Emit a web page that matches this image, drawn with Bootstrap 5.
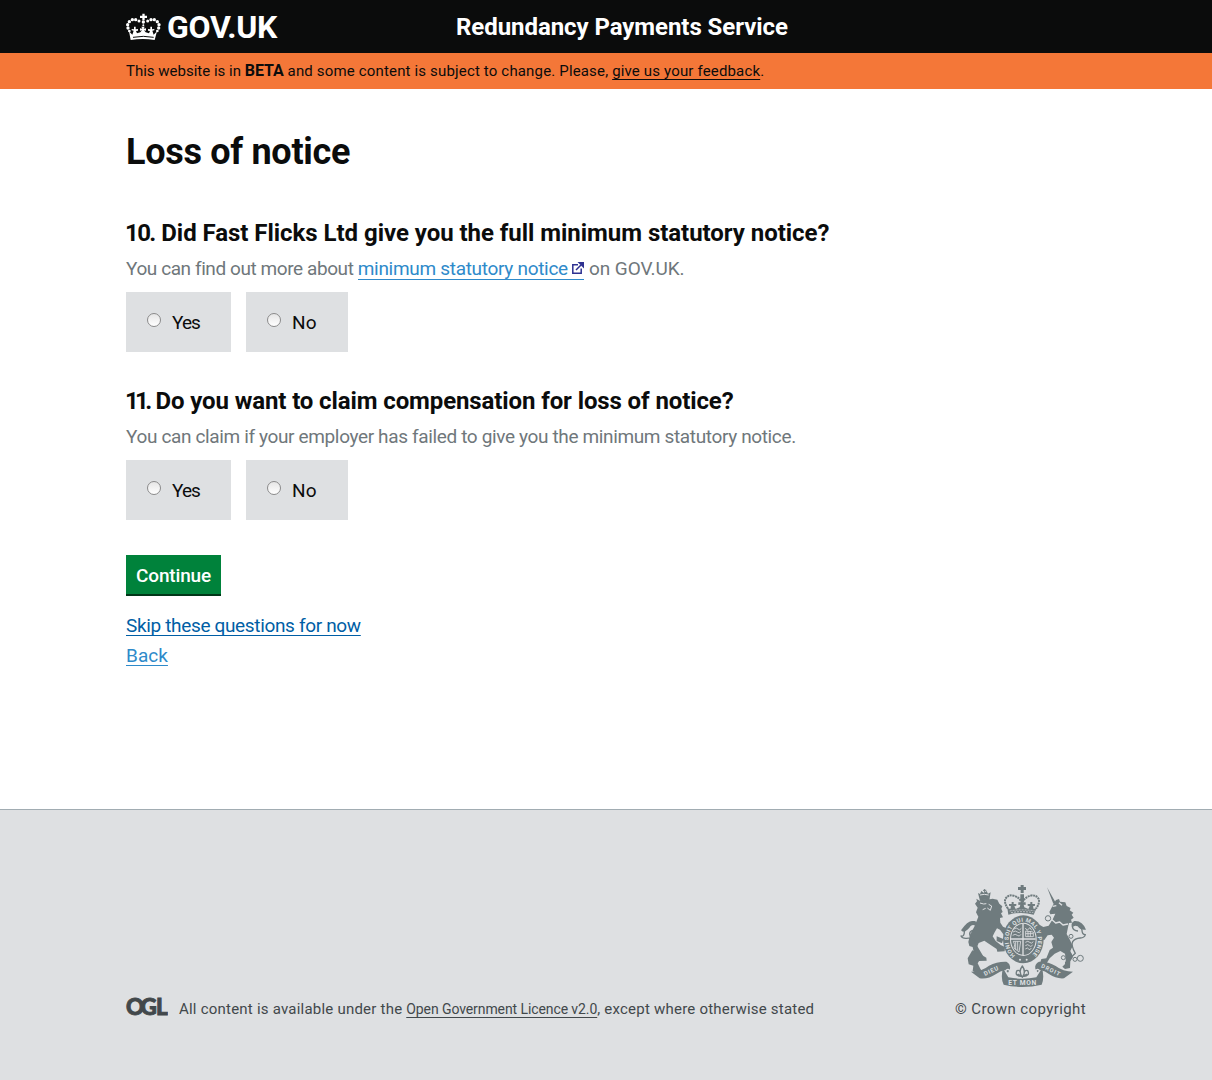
<!DOCTYPE html>
<html lang="en">
<head>
<meta charset="utf-8">
<meta name="viewport" content="width=device-width, initial-scale=1">
<title>Loss of notice - Redundancy Payments Service</title>
<link href="https://cdn.jsdelivr.net/npm/bootstrap@5.3.0/dist/css/bootstrap.min.css" rel="stylesheet">
<style>
body{font-family:Roboto,"Liberation Sans",sans-serif;font-size:19px;line-height:25px;color:#0b0c0c;letter-spacing:-.36px;white-space:nowrap}
a{text-decoration-line:underline;text-decoration-thickness:1px;text-underline-offset:3px;text-decoration-skip-ink:none}
.wrap{width:960px;margin-left:126px}
.top-bar{background:#0b0c0c;height:53px;color:#fff}
.brand{width:330px;font-size:32px;font-weight:700;letter-spacing:-.28px;line-height:55px;color:#fff;text-decoration:none}
.brand svg{margin:-2px 6px 0 0}
.service-name{font-size:24px;font-weight:700;letter-spacing:-.06px;line-height:55px;color:#fff;text-decoration:none}
.beta-bar{background:#f47738;height:36px;font-size:15px;line-height:36px;letter-spacing:.16px}
.beta-bar a{color:#0b0c0c}
.beta-bar strong{font-size:16px;letter-spacing:-.05px}
.beta-lead{letter-spacing:0}
main{height:720px;padding-top:43px}
h1{font-size:36px;font-weight:700;line-height:40px;letter-spacing:-.3px;margin:0 0 46px}
h2{font-size:24px;font-weight:700;line-height:30px;letter-spacing:-.04px;margin:0 0 8px -1px}
h2 span{letter-spacing:-1.6px;word-spacing:2.2px}
#q11 h2{letter-spacing:-.11px}
#q11 h2 span{letter-spacing:-3.7px;word-spacing:4.800px}
.question{margin-bottom:34px}
#q11{margin-bottom:35px}
.hint-text{color:#6f777b;margin:0 0 11px}
.hint-start{letter-spacing:-.42px}
.hint-end{letter-spacing:-.05px}
.hint-text a{display:inline-block;line-height:20px;color:#2e8aca;letter-spacing:-.3px;text-decoration:none;border-bottom:1px solid #2e8aca}
.hint-text svg{vertical-align:1px}
.choices{gap:15px}
.choice{background:#dee0e2;height:60px;padding:1px 0 0 21px;width:105px;letter-spacing:-.9px}
.choice + .choice{width:102px;letter-spacing:.3px}
.choice input{appearance:none;width:14px;height:14px;border:1px solid #8b8b8b;border-radius:50%;background:linear-gradient(#e6e6e6,#fff);margin:-6px 11px 0 0}
.btn-go{background:#00823b;color:#fff;width:95px;height:39px;border:0;border-radius:0;box-shadow:0 2px 0 #003618;font-size:19px;font-weight:500;line-height:25px;letter-spacing:-.17px;padding:2px 0 0;margin-bottom:17px}
.btn-go:hover{background:#00692f;color:#fff}
.next-links{line-height:30px}
.skip-link{color:#005ea5;letter-spacing:-.34px}
.back-link{color:#2e8aca;letter-spacing:.05px}
footer{background:#dee0e2;border-top:1px solid #a1acb2;height:271px;padding-top:74px;font-size:15px;line-height:20px;color:#42484b;letter-spacing:.22px}
footer a{color:#42484b;font-size:14px;letter-spacing:-.09px}
.ogl-mark{margin:-3px 11px 0 -1px}
.arms{margin:0 -1px 11px 0}
.crown-copy{letter-spacing:.4px}
</style>
</head>
<body>
<header class="top-bar"><div class="wrap d-flex">
<a class="brand d-flex align-items-center" href="#"><svg width="35" height="28" viewBox="48 36 105 84" fill="#fff" aria-hidden="true"><path d="M97 38h7v6h7v7h-7v7h-7v-7h-7v-7h7z"/><g><circle cx="100" cy="63" r="5"/><circle cx="87" cy="60" r="4.5"/><circle cx="77" cy="56" r="5"/><circle cx="67" cy="56" r="5"/><circle cx="58" cy="62" r="5"/><circle cx="53" cy="71" r="5"/><circle cx="54" cy="81" r="5"/><circle cx="58" cy="90" r="4"/><circle cx="113" cy="60" r="4.5"/><circle cx="123" cy="56" r="5"/><circle cx="133" cy="56" r="5"/><circle cx="142" cy="62" r="5"/><circle cx="147" cy="71" r="5"/><circle cx="146" cy="81" r="5"/><circle cx="142" cy="90" r="4"/><circle cx="100" cy="73" r="3"/></g><path d="M57 91l10 10 4-12-6-1v-4l7 1v-8h5v8l7-1v5l-6 1 3 7 10-3 5-6-6 1v-7l7 1-3-6h10l-3 6 7-1v7l-6-1 5 6 10 3 3-7-6-1v-5l7 1v-8h5v8l7-1v4l-6 1 4 12 10-10-7 26q-36-6-72 0z"/><path d="M69 109q31-6 62 0" stroke="#0b0c0c" stroke-width="3" fill="none"/></svg>GOV.UK</a>
<a class="service-name" href="#">Redundancy Payments Service</a>
</div></header>
<div class="beta-bar"><div class="wrap"><span class="beta-lead">This website is in </span><strong>BETA</strong> and some content is subject to change. Please, <a href="#">give us your feedback</a>.</div></div>
<main class="wrap">
<h1>Loss of notice</h1>
<form>
<section class="question" id="q10">
<h2><span>10. </span>Did Fast Flicks Ltd give you the full minimum statutory notice?</h2>
<p class="hint-text"><span class="hint-start">You can find out more about </span><a href="#">minimum statutory notice <svg width="12" height="12" viewBox="0 0 12 12" fill="none" stroke="#2e3191" stroke-width="1.5" aria-hidden="true"><path d="M6 2.7H.8v8.5h8.4V6.500M4 8l5-5"/><path d="M5.500 0H12v6.500z" fill="#2e3191" stroke="none"/></svg></a><span class="hint-end"> on GOV.UK.</span></p>
<div class="choices d-flex"><label class="choice d-flex align-items-center"><input type="radio" name="notice">Yes</label><label class="choice d-flex align-items-center"><input type="radio" name="notice">No</label></div>
</section>
<section class="question" id="q11">
<h2><span>11. </span>Do you want to claim compensation for loss of notice?</h2>
<p class="hint-text">You can claim if your employer has failed to give you the minimum statutory notice.</p>
<div class="choices d-flex"><label class="choice d-flex align-items-center"><input type="radio" name="claim">Yes</label><label class="choice d-flex align-items-center"><input type="radio" name="claim">No</label></div>
</section>
<button type="button" class="btn btn-go d-block">Continue</button>
<div class="next-links d-flex flex-column align-items-start"><a class="skip-link" href="#">Skip these questions for now</a><a class="back-link" href="#">Back</a></div>
</form>
</main>
<footer><div class="wrap d-flex align-items-end justify-content-between">
<div class="d-flex"><svg class="ogl-mark" width="43" height="23" viewBox="-1 0 43 23" role="img" aria-label="OGL"><text x="0 14.600 30" y="19" font-family="Lato" font-weight="900" font-size="22.5" fill="#42484b" stroke="#42484b" stroke-width=".9" letter-spacing="0">OGL</text></svg><div>All content is available under the <a href="#">Open Government Licence v2.0</a>, except where otherwise stated</div></div>
<div class="d-flex flex-column align-items-end">
<svg class="arms" width="127" height="104" viewBox="45 27 381 312" fill="#6f7b7e" stroke-linejoin="round" role="img" aria-label="Royal coat of arms">
<!-- lion -->
<g stroke="#6f7b7e">
<path stroke="none" d="M99 54l6 3 4-9 8 6 8-6 4 8 8-4-4 24q-14-5-28 2z"/>
<path fill="none" stroke-width="3" d="M119 42v14M114 46h10"/>
<path stroke="none" d="M104 77q14-7 30-4l9-2 14 3 6 12 9 8-3 7 4 10-5 4 6 12-9 2 1 14 8 12 9 4 0 26-8-7-10-14-9-4-7 12-6 12 9 14 15 12 13 6-1 13-22 1-2-8-18-12-19-13-17 7-4 10 9 15 8 13 10 6 1 9-24 1-14-22-4-20-10-3-3-12 5-22 14-26 11-28-7-13 5-14-8-12 6-7-2-8z"/>
<path fill="none" stroke-width="4" d="M83 233q18-6 10-26-9-20-28-17-13 1-17-7 10 2 10-12 3-24 25-30 12-4 12 10-1 14-16 17-8 5-3 15l18 20"/>
<path stroke="none" d="M48 166q20-30 37-28 11 3 9 18-7-10-17-3-10 16-23 17z"/>
<path stroke="none" d="M155 184l20 8-4 13-16-7zM82 226l-14 24 3 18 14 4-2 16 15 8 17-1-9-14-8-16 15-24z"/>
</g>
<path d="M105 84l11 3 8-1M131 88l9 5-4 13-9-7M113 104l9-4M105 60q13-4 26 0" fill="none" stroke="#dee0e2" stroke-width="3"/>
<!-- unicorn -->
<path d="M306 37l25 44-6 5zM326 86l7-11 9-3 3 8 16 2 4 11 12 6-3 7 11 7-5 6 6 9-8 6 3 9-9 1-3 13-4 20 10 18 8 18-7 15 8 18-8 13-1 20-15 3-8-7 11-11-3-28-14-8-17 8-15 14-9 15-19-3 3-10 15-2 10-25 10-7-5-17 8-13-7-9-12 2-10 14-11-3 4-11-10-14-5 13-11-4 4-15-3-10 13-4 16 9 16-4 13-21 7-15-15 2-3-7z"/>
<path d="M303 128l8 10 10-4 11 10 12-3 10 9 15-3M323 94l11-2M342 83l9 8" fill="none" stroke="#dee0e2" stroke-width="4"/>
<path d="M376 249l15-14q-14-24-8-35 6-10 23-11 12 0 15-10-10 0-10-13-3-20-22-24-9 0-7 13 2 12 17 13" fill="none" stroke="#6f7b7e" stroke-width="4"/>
<path d="M423 164q-11-28-35-26-10 5-5 19 5-8 15-3 9 13 25 10z"/>
<g fill="none" stroke="#6f7b7e" stroke-width="3"><circle cx="406" cy="250" r="9"/><circle cx="390" cy="253" r="6"/><circle cx="375" cy="240" r="5"/><circle cx="355" cy="248" r="6"/><circle cx="367" cy="264" r="6"/><circle cx="378" cy="184" r="6"/><circle cx="309" cy="130" r="8"/></g>
<!-- shield and garter -->
<ellipse cx="235" cy="193" rx="61" ry="72"/>
<ellipse cx="235" cy="193" rx="40" ry="50" fill="#dee0e2"/>
<ellipse cx="235" cy="193" rx="37" ry="47"/>
<path d="M234 146v94M198 192h74" stroke="#dee0e2" stroke-width="4"/>
<g fill="none" stroke="#dee0e2" stroke-width="2.500"><path d="M207 162q7-6 12 0t10-2M204 171q7-6 13 0t11-2M203 181q8-6 14 0t11-3M241 202q8-6 13 0t11-2M241 212q8-6 12 0t10-2M241 222q7-6 10 0t8-3M241 159l5 7 9-8 5 8M242 168v17h23v-14zM249 168v17M256 168v17M242 176h22M205 199q7 10 2 20l15 12 5-32zM212 200v24M218 199v27"/></g>
<path id="garter" d="M211 241A44 55 0 1 1 259 241" fill="none"/>
<text fill="#dee0e2" font-family="Roboto" font-size="17" font-weight="700" letter-spacing="0"><textPath href="#garter" textLength="255">HONI SOIT QUI MAL Y PENSE</textPath></text>
<g fill="#dee0e2"><circle cx="225" cy="254" r="3"/><circle cx="245" cy="254" r="3"/></g>
<!-- crown -->
<path d="M227 30h9v6h7v9h-7v9h-9v-9h-8v-9h8zM226 58h11v21h-11z"/>
<path d="M189 101q-12-17-8-29 8-14 25-10 18 5 25 22 8-17 25-22 17-4 25 10 4 12-8 29" fill="none" stroke="#6f7b7e" stroke-width="6" stroke-dasharray="6 2"/>
<path d="M187 99l9 3 2-8-6-2v-5h8v-6h6v6h8v5l-6 2 4 8 12-5 2-8-6 1v-8h22v8l-6-1 2 8 12 5 4-8-6-2v-5h8v-6h6v6h8v5l-6 2 2 8 9-3-9 20q-38-10-76 0z"/>
<path d="M194 108q37-7 75 0M198 113q34-6 67 0" fill="none" stroke="#dee0e2" stroke-width="2" stroke-dasharray="6 3"/>
<!-- motto ribbons -->
<path d="M78 290q32 0 54-18 24-13 52-12 13 6 11 22l-6 11-8-8q-15 2-29 13-22 15-48 12z"/>
<path d="M384 290q-30 0-52-17-22-14-50-13-14 7-11 21l6 11 8-7q16 3 28 13 20 14 44 12z"/>
<path d="M174 280l16 27q42 8 84 0l17-27q8 27-1 49-58 14-114 0-10-21-2-49z"/>
<path d="M182 287q13-12 14 14M284 287q-13-12-13 14" fill="none" stroke="#dee0e2" stroke-width="4"/>
<g fill="#dee0e2" font-family="Roboto" font-weight="700"><text transform="translate(120 303) rotate(-25)" textLength="46" font-size="18">DIEU</text><text x="190" y="331" textLength="84" font-size="20">ET MON</text><text transform="translate(287 277) rotate(25)" textLength="61" font-size="17">DROIT</text></g>
<path d="M232 273q-13 17 0 34 12-17 0-34zM227 303q-19-1-11-16 9-4 11 9 2 8-9 1M237 303q19-1 11-16-9-4-11 9-2 8 9 1M219 304h26" fill="none" stroke="#6f7b7e" stroke-width="4"/>
</svg>
<div class="crown-copy">© Crown copyright</div>
</div>
</div></footer>
</body>
</html>
